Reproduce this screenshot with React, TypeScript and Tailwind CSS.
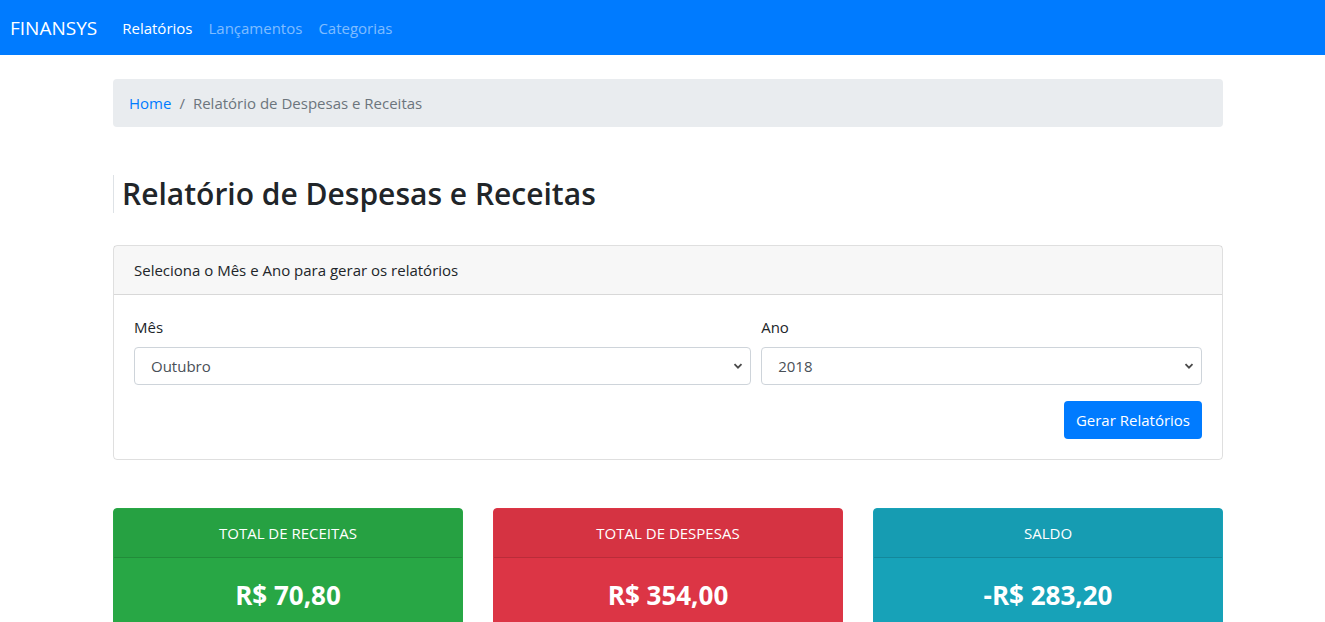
import React from "react";

const font = { fontFamily: '"Open Sans", "Noto Sans", sans-serif' };

const Chevron = () => (
  <svg
    className="pointer-events-none absolute right-[8px] top-1/2 -translate-y-1/2"
    width="10"
    height="10"
    viewBox="0 0 10 10"
  >
    <path d="M1.5 3.2 L5 6.7 L8.5 3.2" fill="none" stroke="#4a4a4a" strokeWidth="1.8" />
  </svg>
);

const SelectBox = ({ value, options }: { value: string; options: string[] }) => (
  <div className="relative">
    <select
      defaultValue={value}
      className="block h-[38px] w-full appearance-none rounded border border-[#ced4da] bg-white pl-4 pr-8 text-[15px] text-[#495057] outline-none"
    >
      {options.map((o) => (
        <option key={o}>{o}</option>
      ))}
    </select>
    <Chevron />
  </div>
);

const meses = [
  "Janeiro",
  "Fevereiro",
  "Março",
  "Abril",
  "Maio",
  "Junho",
  "Julho",
  "Agosto",
  "Setembro",
  "Outubro",
  "Novembro",
  "Dezembro",
];

const totais = [
  { label: "TOTAL DE RECEITAS", value: "R$ 70,80", bg: "bg-[#28a745]", border: "border-[#28a745]" },
  { label: "TOTAL DE DESPESAS", value: "R$ 354,00", bg: "bg-[#dc3545]", border: "border-[#dc3545]" },
  { label: "SALDO", value: "-R$ 283,20", bg: "bg-[#17a2b8]", border: "border-[#17a2b8]" },
];

export default function App() {
  return (
    <div className="min-h-[622px] bg-white text-[15px] leading-6 text-[#212529]" style={font}>
      <nav className="flex h-[55px] items-center bg-[#007bff] px-[10px]">
        <span className="mr-[17px] text-[19px] text-white">FINANSYS</span>
        <a className="px-2 text-white">Relatórios</a>
        <a className="px-2 text-white/50">Lançamentos</a>
        <a className="px-2 text-white/50">Categorias</a>
      </nav>

      <div className="ml-[98px] w-[1140px] px-[15px]">
        <div className="mt-6 flex rounded bg-[#e9ecef] px-4 py-3">
          <a className="text-[#007bff]">Home</a>
          <span className="px-2 text-[#6c757d]">/</span>
          <span className="text-[#6c757d]">Relatório de Despesas e Receitas</span>
        </div>

        <h1 className="mt-12 border-l border-[#dee2e6] pl-2 text-[30px] font-semibold leading-[38px]">
          Relatório de Despesas e Receitas
        </h1>

        <div className="mt-8 rounded border border-black/[.125]">
          <div className="border-b border-black/[.125] bg-black/[.03] px-5 py-3">
            Seleciona o Mês e Ano para gerar os relatórios
          </div>
          <div className="p-5">
            <div className="grid grid-cols-[7fr_5fr] gap-[10px]">
              <div>
                <label className="mb-2 block">Mês</label>
                <SelectBox value="Outubro" options={meses} />
              </div>
              <div>
                <label className="mb-2 block">Ano</label>
                <SelectBox value="2018" options={["2017", "2018", "2019"]} />
              </div>
            </div>
            <div className="mt-4 flex justify-end">
              <button className="h-[38px] rounded bg-[#007bff] px-3 text-white">Gerar Relatórios</button>
            </div>
          </div>
        </div>

        <div className="mt-12 grid grid-cols-3 gap-[30px]">
          {totais.map((t) => (
            <div key={t.label} className={`rounded border text-white ${t.bg} ${t.border}`}>
              <div className="border-b border-black/[.125] bg-black/[.03] px-5 py-3 text-center">{t.label}</div>
              <div className="px-5 pt-5 pb-6 text-center">
                <h3 className="text-[26px] font-bold leading-[34px]">{t.value}</h3>
              </div>
            </div>
          ))}
        </div>
      </div>
    </div>
  );
}
